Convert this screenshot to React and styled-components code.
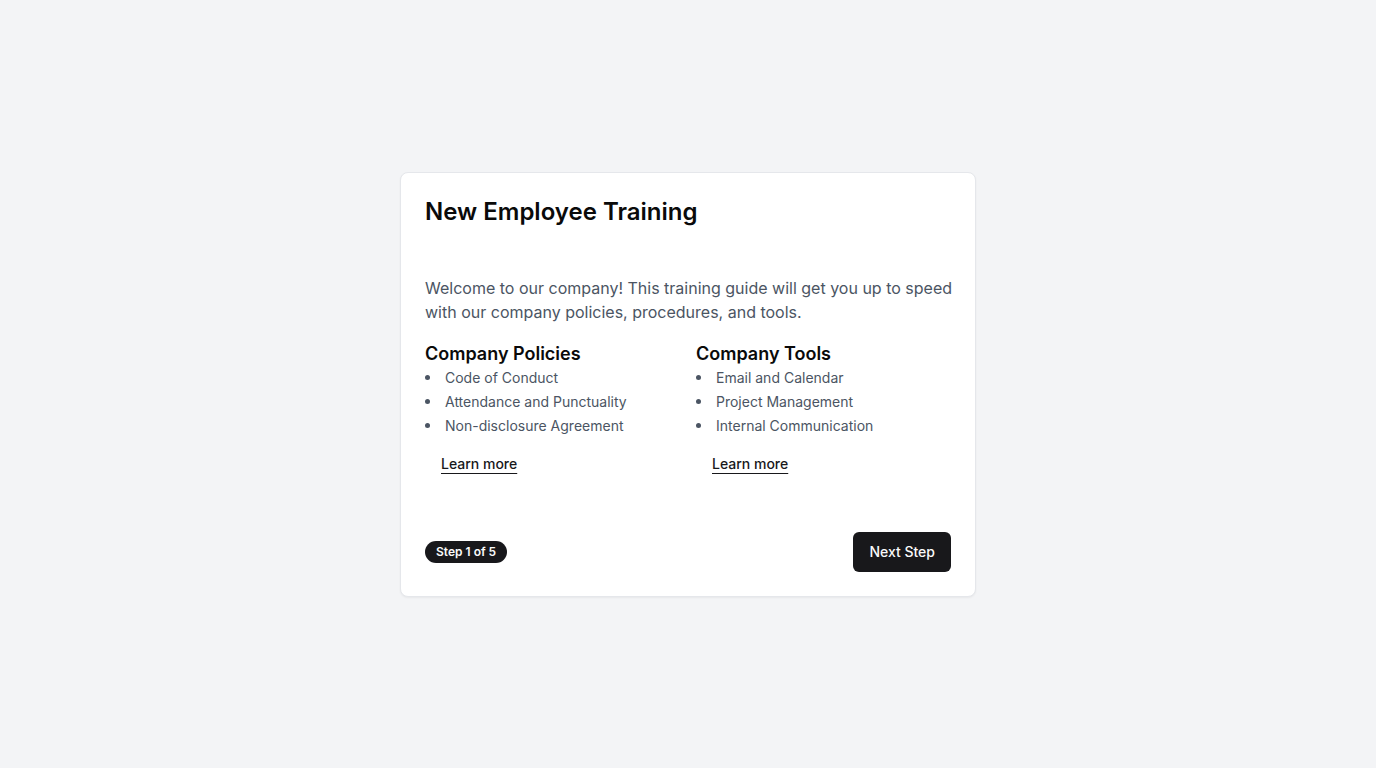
import React from "react";
import styled, { createGlobalStyle } from "styled-components";

const Global = createGlobalStyle`
  * { box-sizing: border-box; }
  html, body { margin: 0; padding: 0; }
  body {
    background: #f3f4f6;
    font-family: Inter, "Noto Sans", sans-serif;
    -webkit-font-smoothing: antialiased;
  }
`;

const Page = styled.div`
  min-height: 768px;
  display: flex;
  align-items: center;
  justify-content: center;
`;

const Card = styled.div`
  width: 576px;
  background: #ffffff;
  border: 1px solid #e5e7eb;
  border-radius: 8px;
  box-shadow: 0 1px 2px rgba(0, 0, 0, 0.05);
  color: #0a0a0a;
`;

const Header = styled.div`
  padding: 23px 24px 48px;
`;

const Title = styled.h2`
  margin: 0;
  font-size: 24px;
  line-height: 32px;
  font-weight: 600;
  color: #0a0a0a;
`;

const Content = styled.div`
  padding: 0 24px 24px;
`;

const Intro = styled.p`
  margin: 0 -4px 16px 0;
  font-size: 16px;
  line-height: 24px;
  color: #4b5563;
`;

const Columns = styled.div`
  display: grid;
  grid-template-columns: 1fr 1fr;
  gap: 16px;
`;

const Section = styled.div`
  display: flex;
  flex-direction: column;
  align-items: flex-start;
`;

const SectionTitle = styled.h3`
  margin: 0;
  font-size: 18px;
  line-height: 28px;
  font-weight: 600;
  color: #0a0a0a;
`;

const List = styled.ul`
  margin: 0;
  padding: 0;
  list-style: none;
  display: flex;
  flex-direction: column;
  gap: 4px;
`;

const Item = styled.li`
  display: flex;
  align-items: center;
  font-size: 14px;
  line-height: 20px;
  color: #4b5563;

  &::before {
    content: "";
    width: 5px;
    height: 5px;
    border-radius: 50%;
    background: #4b5563;
    margin-right: 15px;
    flex-shrink: 0;
  }
`;

const LinkButton = styled.button`
  margin-top: 8px;
  height: 40px;
  padding: 0 16px;
  border: 0;
  background: transparent;
  font-family: inherit;
  font-size: 14px;
  font-weight: 500;
  color: #18181b;
  text-decoration: underline;
  text-underline-offset: 4px;
  cursor: pointer;
`;

const Footer = styled.div`
  padding: 24px 24px 24px;
  display: flex;
  align-items: center;
  justify-content: space-between;
`;

const Badge = styled.span`
  display: inline-flex;
  align-items: center;
  height: 22px;
  padding: 0 10px;
  border: 1px solid transparent;
  border-radius: 999px;
  background: #18181b;
  color: #fafafa;
  font-size: 12px;
  font-weight: 600;
`;

const PrimaryButton = styled.button`
  height: 40px;
  padding: 0 16px;
  border: 0;
  border-radius: 6px;
  background: #18181b;
  color: #fafafa;
  font-family: inherit;
  font-size: 14px;
  font-weight: 500;
  cursor: pointer;
`;

const sections = [
  {
    title: "Company Policies",
    items: ["Code of Conduct", "Attendance and Punctuality", "Non-disclosure Agreement"],
  },
  {
    title: "Company Tools",
    items: ["Email and Calendar", "Project Management", "Internal Communication"],
  },
];

export default function App() {
  return (
    <>
      <Global />
      <Page>
        <Card>
          <Header>
            <Title>New Employee Training</Title>
          </Header>
          <Content>
            <Intro>
              Welcome to our company! This training guide will get you up to speed
              with our company policies, procedures, and tools.
            </Intro>
            <Columns>
              {sections.map((s) => (
                <Section key={s.title}>
                  <SectionTitle>{s.title}</SectionTitle>
                  <List>
                    {s.items.map((it) => (
                      <Item key={it}>{it}</Item>
                    ))}
                  </List>
                  <LinkButton>Learn more</LinkButton>
                </Section>
              ))}
            </Columns>
          </Content>
          <Footer>
            <Badge>Step 1 of 5</Badge>
            <PrimaryButton>Next Step</PrimaryButton>
          </Footer>
        </Card>
      </Page>
    </>
  );
}
